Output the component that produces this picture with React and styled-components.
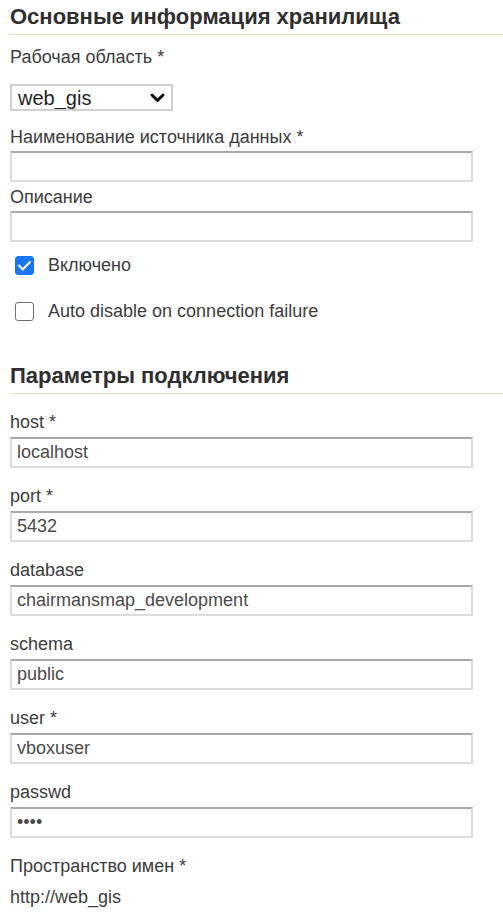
import React from "react";
import styled, { createGlobalStyle } from "styled-components";

const GlobalStyle = createGlobalStyle`
  html, body {
    margin: 0;
    padding: 0;
    background: #fff;
  }
  body {
    font-family: "Liberation Sans", Arial, sans-serif;
    color: #3a3a3a;
  }
`;

const Page = styled.form`
  display: flex;
  flex-direction: column;
  padding: 0 0 12px 10px;
  width: 493px;
`;

const Heading = styled.h3`
  margin: ${(p) => (p.first ? "4px" : "41px")} 0 0 0;
  padding: 0 0 4px 0;
  font-size: 22px;
  line-height: 26px;
  font-weight: bold;
  color: #2f2f2f;
  border-bottom: 1.5px solid #d4e8c2;
`;

const Field = styled.div`
  display: flex;
  flex-direction: column;
  gap: ${(p) => p.gap || 4}px;
  margin-top: ${(p) => p.top || 17}px;
`;

const Label = styled.label`
  font-size: 18px;
  line-height: 22px;
  color: #3c3c3c;
`;

const TextInput = styled.input`
  box-sizing: border-box;
  width: 463px;
  height: 31px;
  margin: 0;
  padding: 0 5px;
  font-family: "Liberation Sans", Arial, sans-serif;
  font-size: 18px;
  color: #4a4a4a;
  background: #fff;
  border: 2px solid #dcdcdc;
  border-top-color: #a9a9a9;
  border-radius: 0;
  outline: none;
`;

const SelectWrap = styled.div`
  position: relative;
  width: 163px;
  height: 27px;
`;

const Select = styled.select`
  appearance: none;
  box-sizing: border-box;
  width: 100%;
  height: 100%;
  margin: 0;
  padding: 0 0 0 6px;
  font-family: "Liberation Sans", Arial, sans-serif;
  font-size: 20px;
  color: #1f1f1f;
  background: #fff;
  border: 2px solid #d0d0d0;
  border-radius: 0;
  outline: none;
`;

const Chevron = styled.svg`
  position: absolute;
  right: 8px;
  top: 9px;
  pointer-events: none;
`;

const CheckRow = styled.label`
  display: flex;
  align-items: center;
  gap: 14px;
  height: 22px;
  margin-top: ${(p) => p.top}px;
  padding-left: 5px;
  font-size: 18px;
  color: #3c3c3c;
`;

const Box = styled.input`
  appearance: none;
  box-sizing: border-box;
  position: relative;
  width: 19px;
  height: 19px;
  margin: 0;
  border: 1.5px solid #6f6f6f;
  border-radius: 3px;
  background: #fff;

  &:checked {
    background: #1976f0;
    border-color: #1976f0;
  }

  &:checked::after {
    content: "";
    position: absolute;
    left: 5px;
    top: 1px;
    width: 5px;
    height: 10px;
    border: solid #fff;
    border-width: 0 2.5px 2.5px 0;
    transform: rotate(45deg);
  }
`;

const Value = styled.div`
  margin-top: 9px;
  font-size: 18px;
  line-height: 22px;
  color: #3c3c3c;
`;

const connection = [
  { label: "host *", value: "localhost" },
  { label: "port *", value: "5432" },
  { label: "database", value: "chairmansmap_development" },
  { label: "schema", value: "public" },
  { label: "user *", value: "vboxuser" },
  { label: "passwd", value: "••••", type: "password" },
];

export default function App() {
  return (
    <>
      <GlobalStyle />
      <Page onSubmit={(e) => e.preventDefault()}>
        <Heading first>Основные информация хранилища</Heading>

        <Field top={11} gap={16}>
          <Label>Рабочая область *</Label>
          <SelectWrap>
            <Select defaultValue="web_gis">
              <option value="web_gis">web_gis</option>
            </Select>
            <Chevron width="15" height="10" viewBox="0 0 15 10">
              <polyline
                points="2,2 7.5,7.5 13,2"
                fill="none"
                stroke="#111"
                strokeWidth="3"
                strokeLinecap="round"
                strokeLinejoin="round"
              />
            </Chevron>
          </SelectWrap>
        </Field>

        <Field top={15} gap={3}>
          <Label>Наименование источника данных *</Label>
          <TextInput type="text" />
        </Field>

        <Field top={4} gap={3}>
          <Label>Описание</Label>
          <TextInput type="text" />
        </Field>

        <CheckRow top={12}>
          <Box type="checkbox" defaultChecked />
          Включено
        </CheckRow>
        <CheckRow top={24}>
          <Box type="checkbox" />
          Auto disable on connection failure
        </CheckRow>

        <Heading>Параметры подключения</Heading>

        {connection.map((f) => (
          <Field key={f.label}>
            <Label>{f.label}</Label>
            <TextInput type="text" defaultValue={f.value} />
          </Field>
        ))}

        <Field>
          <Label>Пространство имен *</Label>
        </Field>
        <Value>http://web_gis</Value>
      </Page>
    </>
  );
}
